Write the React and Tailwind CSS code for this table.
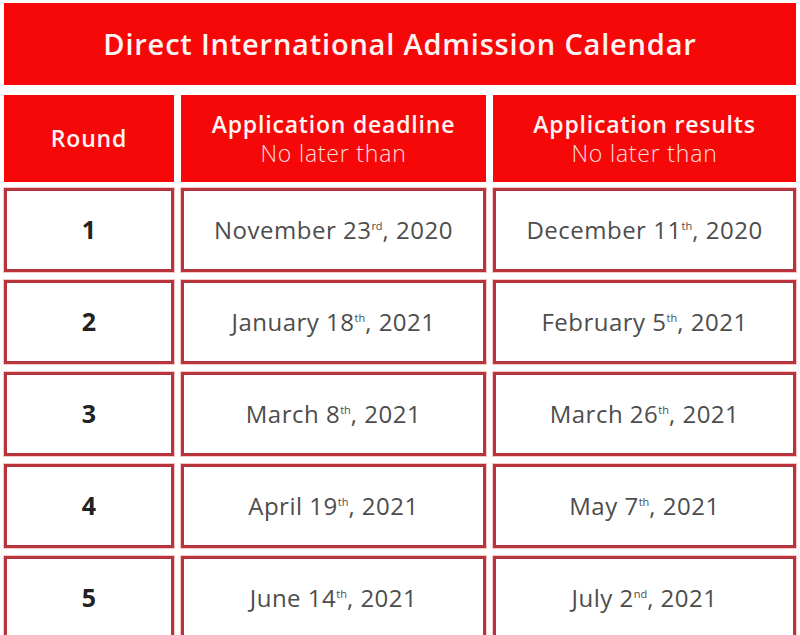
import React from "react";

const rows = [
  { round: "1", deadline: ["November 23", "rd", ", 2020"], result: ["December 11", "th", ", 2020"] },
  { round: "2", deadline: ["January 18", "th", ", 2021"], result: ["February 5", "th", ", 2021"] },
  { round: "3", deadline: ["March 8", "th", ", 2021"], result: ["March 26", "th", ", 2021"] },
  { round: "4", deadline: ["April 19", "th", ", 2021"], result: ["May 7", "th", ", 2021"] },
  { round: "5", deadline: ["June 14", "th", ", 2021"], result: ["July 2", "nd", ", 2021"] },
];

const DateText = ({ parts }) => (
  <span className="text-[24px] text-[#4d4d4d] tracking-[0.5px]">
    {parts[0]}
    <sup className="text-[11px] relative -top-[9px] tracking-normal">{parts[1]}</sup>
    {parts[2]}
  </span>
);

const cell = "border-[3px] border-[#b8343d] shadow-[0_0_0_1px_#f4c7c9] bg-white flex items-center justify-center";

export default function App() {
  return (
    <div className="w-[800px] h-[635px] overflow-hidden bg-white pt-[3px] px-[4px]" style={{ fontFamily: "'Open Sans', 'Liberation Sans', sans-serif" }}>
      <div className="h-[82px] bg-[#f70808] flex items-center justify-center">
        <h1 className="text-[#fff4f4] text-[29px] font-semibold tracking-[0.8px]">Direct International Admission Calendar</h1>
      </div>

      <div className="grid grid-cols-[170px_305px_303px] gap-x-[7px] mt-[10px]">
        <div className="h-[87px] bg-[#f70808] flex items-center justify-center">
          <span className="text-[#fff4f4] text-[23px] font-semibold tracking-[0.8px]">Round</span>
        </div>
        <div className="h-[87px] bg-[#f70808] flex flex-col items-center justify-center leading-[29px]">
          <span className="text-[#fff4f4] text-[23px] font-semibold tracking-[0.8px]">Application deadline</span>
          <span className="text-[#ffdede] text-[23px] font-light tracking-[0.8px]">No later than</span>
        </div>
        <div className="h-[87px] bg-[#f70808] flex flex-col items-center justify-center leading-[29px]">
          <span className="text-[#fff4f4] text-[23px] font-semibold tracking-[0.8px]">Application results</span>
          <span className="text-[#ffdede] text-[23px] font-light tracking-[0.8px]">No later than</span>
        </div>
      </div>

      <div className="grid grid-cols-[170px_305px_303px] gap-x-[7px] gap-y-[8px] mt-[6px] auto-rows-[84px]">
        {rows.map((r) => (
          <React.Fragment key={r.round}>
            <div className={cell}>
              <span className="text-[25px] font-bold text-[#222]">{r.round}</span>
            </div>
            <div className={cell}>
              <DateText parts={r.deadline} />
            </div>
            <div className={cell}>
              <DateText parts={r.result} />
            </div>
          </React.Fragment>
        ))}
      </div>
    </div>
  );
}
